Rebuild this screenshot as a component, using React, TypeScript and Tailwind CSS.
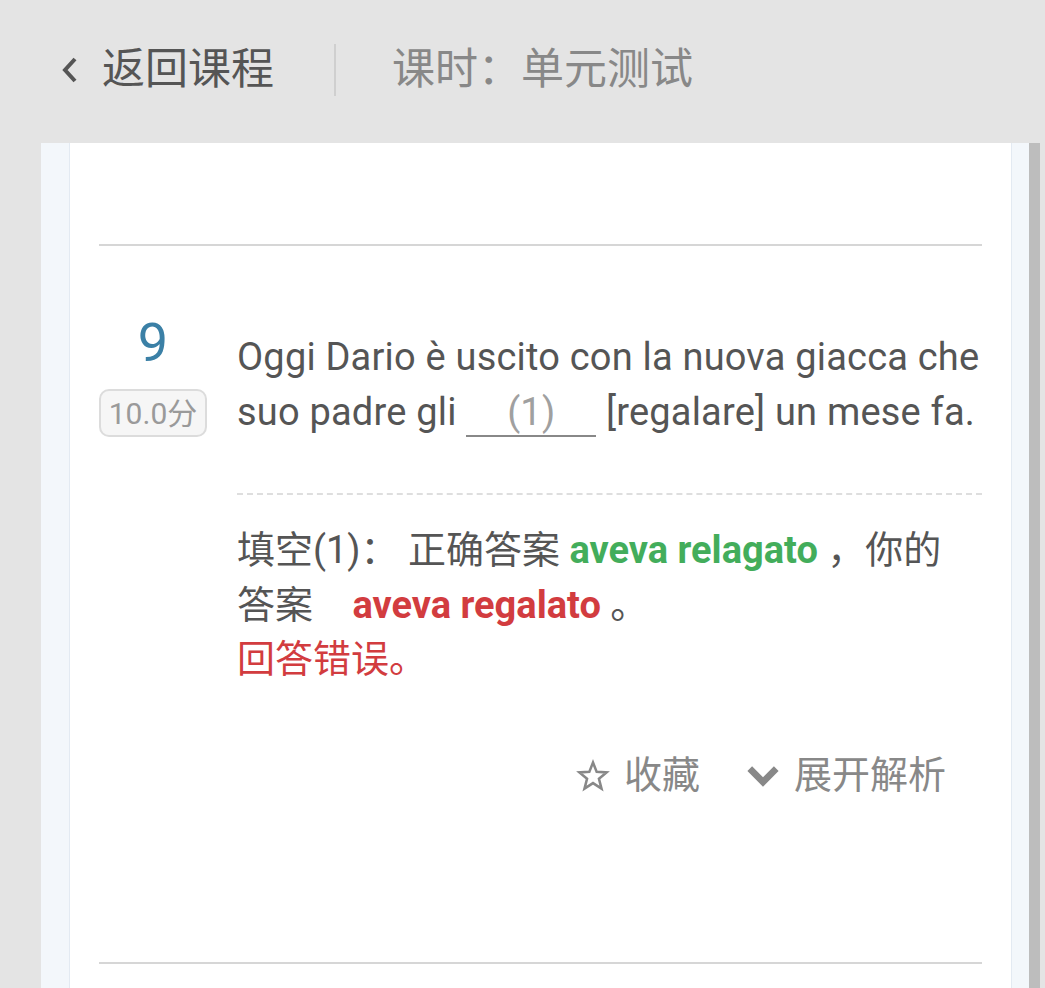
const font = "font-['Roboto','Noto_Sans_CJK_SC',sans-serif]";

function StarIcon() {
  return (
    <svg width="34" height="34" viewBox="0 0 24 24" fill="none" stroke="#888" strokeWidth="1.8" strokeLinejoin="miter">
      <path d="M12 2.5l2.6 6.6 7 .4-5.4 4.5 1.8 6.9L12 17l-6 3.9 1.8-6.9-5.4-4.5 7-.4z" />
    </svg>
  );
}

function ChevronDown() {
  return (
    <svg width="34" height="34" viewBox="0 0 24 24" fill="#888">
      <path d="M1 8.5l3.3-3.3 7.7 7.7 7.7-7.7L23 8.5 12 19.5z" />
    </svg>
  );
}

export default function App() {
  return (
    <div className={`w-[1045px] h-[988px] bg-[#e4e4e4] overflow-hidden flex flex-col ${font}`}>
      <header className="h-[143px] shrink-0 flex items-center pl-[60px] pb-[4px]">
        <svg width="20" height="30" viewBox="0 0 20 30" className="mr-[22px]">
          <path d="M15 4L5 15l10 11" fill="none" stroke="#555" strokeWidth="4" />
        </svg>
        <span className="text-[43px] text-[#555] leading-none">返回课程</span>
        <div className="w-[2px] h-[52px] bg-[#cfcfcf] ml-[60px] mr-[56px]" />
        <span className="text-[43px] text-[#888] leading-none">课时：单元测试</span>
      </header>

      <div className="flex flex-1 pl-[41px]">
        <div className="w-[29px] bg-[#f3f7fb] border-r border-[#e3eaf2]" />
        <div className="w-[941px] bg-white px-[29px]">
          <div className="h-[101px]" />
          <div className="h-[2px] bg-[#d6d6d6]" />

          <div className="flex pt-[70px]">
            <div className="w-[108px] flex flex-col items-center shrink-0">
              <div className="text-[54px] leading-none text-[#3b80a6]">9</div>
              <div className="mt-[19px] w-[108px] h-[48px] border-2 border-[#dcdcdc] rounded-[10px] bg-[#f6f6f6] text-[#9a9a9a] text-[30px] flex items-center justify-center">
                10.0分
              </div>
            </div>
            <div className="ml-[30px] text-[38px] tracking-[0.2px] leading-[55px] text-[#555] pt-[14px]">
              Oggi Dario è uscito con la nuova giacca che suo padre gli{" "}
              <span className="inline-block w-[130px] border-b-2 border-[#888] text-center text-[#a0a0a0] leading-[46px] align-baseline">(1)</span>{" "}
              [regalare] un mese fa.
            </div>
          </div>

          <div className="ml-[138px] mt-[53px] border-t-2 border-dashed border-[#dedede]" />
          <div className="ml-[138px] pt-[28px] text-[38px] leading-[55px] text-[#555]">
            <div>
              填空(1)： 正确答案 <span className="font-bold text-[#43ad5b]">aveva relagato</span> ，你的
            </div>
            <div>
              答案 <span className="ml-[30px] font-bold text-[#d23c3f]">aveva regalato</span> 。
            </div>
            <div className="text-[#d23c3f] leading-[52px]">回答错误。</div>
          </div>

          <div className="flex justify-end items-center pr-[36px] mt-[62px] text-[38px] text-[#888]">
            <StarIcon />
            <span className="ml-[14px]">收藏</span>
            <span className="ml-[46px]"><ChevronDown /></span>
            <span className="ml-[14px]">展开解析</span>
          </div>

          <div className="h-[158px]" />
          <div className="h-[2px] bg-[#d6d6d6]" />
        </div>
        <div className="w-[18px] bg-[#f3f7fb] border-l border-[#e3eaf2]" />
        <div className="w-[11px] bg-[#bdbdbd]" />
      </div>
    </div>
  );
}
